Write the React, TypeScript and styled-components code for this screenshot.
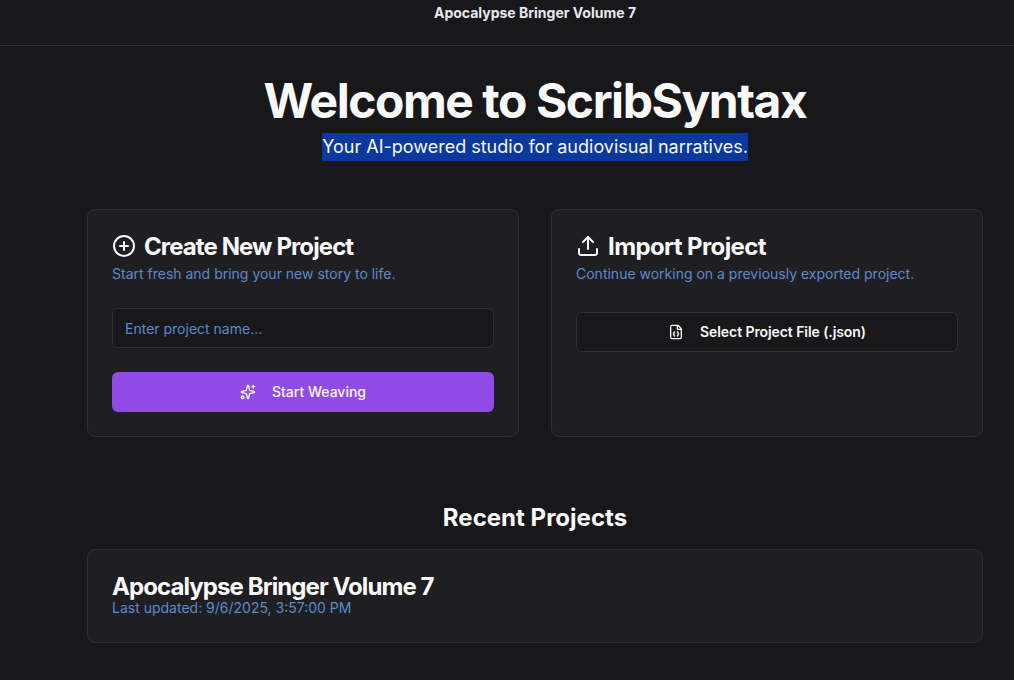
import React from "react";
import { CirclePlus, FileJson, Sparkles, Upload } from "lucide-react";
import styled, { createGlobalStyle } from "styled-components";

const GlobalStyle = createGlobalStyle`
  html, body {
    margin: 0;
    padding: 0;
    background: #18181b;
  }
  * {
    box-sizing: border-box;
  }
`;

const Page = styled.div`
  height: 680px;
  overflow: hidden;
  background: #18181b;
  font-family: Inter, "Liberation Sans", sans-serif;
  color: #fafafa;
`;

const Header = styled.header`
  height: 46px;
  padding: 3px 0 0 56px;
  border-bottom: 1px solid #303034;
  text-align: center;
  font-size: 14px;
  font-weight: 700;
  line-height: 20px;
  color: #e8e8ee;
`;

const Content = styled.div`
  padding-left: 56px;
`;

const Main = styled.main`
  width: 896px;
  margin: 0 auto;
  padding-top: 31px;
`;

const Hero = styled.div`
  text-align: center;
  margin-bottom: 48px;
`;

const Title = styled.h1`
  margin: 0 0 8px;
  font-size: 48px;
  line-height: 48px;
  font-weight: 700;
  letter-spacing: -1.46px;
  color: #fafafa;
`;

const Tagline = styled.p`
  margin: 0;
  font-size: 18px;
  line-height: 28px;
`;

const Selected = styled.span`
  display: inline-block;
  background: #0b389f;
  color: #fafafa;
`;

const CardGrid = styled.div`
  display: grid;
  grid-template-columns: 1fr 1fr;
  gap: 32px;
  margin-bottom: 64px;
`;

const Card = styled.section`
  padding: 24px;
  background: #1f1f23;
  border: 1px solid #303034;
  border-radius: 8px;
`;

const CardTitle = styled.h2`
  display: flex;
  align-items: center;
  gap: 8px;
  margin: 0;
  font-size: 24px;
  font-weight: 700;
  color: #fafafa;
`;

const CardTitleText = styled.span<{ $tracking: number }>`
  padding-top: 2px;
  line-height: 22px;
  letter-spacing: ${props => props.$tracking}px;
`;

const Muted = styled.p`
  margin: 6px 0 0;
  font-size: 14px;
  line-height: 20px;
  color: #5c8acb;
`;

const CardBody = styled.div<{ $offset: number }>`
  display: flex;
  flex-direction: column;
  gap: 24px;
  margin-top: ${props => props.$offset}px;
`;

const NameInput = styled.input`
  height: 40px;
  width: 100%;
  padding: 0 12px;
  background: #18181b;
  border: 1px solid #303034;
  border-radius: 6px;
  font-family: inherit;
  font-size: 14px;
  color: #fafafa;

  &::placeholder {
    color: #5c8acb;
    opacity: 1;
  }
`;

const ActionButton = styled.button<{ $primary?: boolean }>`
  display: flex;
  align-items: center;
  justify-content: center;
  gap: 16px;
  height: 40px;
  width: 100%;
  background: ${props => (props.$primary ? "#914ae6" : "#18181b")};
  border: ${props => (props.$primary ? "none" : "1px solid #303034")};
  border-radius: 6px;
  font-family: inherit;
  font-size: 14px;
  font-weight: ${props => (props.$primary ? 500 : 600)};
  letter-spacing: ${props => (props.$primary ? 0 : -0.08)}px;
  color: #fafafa;
`;

const ButtonLabel = styled.span`
  padding-bottom: 2px;
`;

const SectionTitle = styled.h2`
  margin: 0 0 16px;
  padding-top: 2px;
  text-align: center;
  font-size: 24px;
  line-height: 30px;
  font-weight: 700;
  letter-spacing: 0.02px;
  color: #fafafa;
`;

const ProjectName = styled.h3`
  margin: 0;
  padding-top: 2px;
  font-size: 24px;
  line-height: 22px;
  font-weight: 700;
  letter-spacing: -0.92px;
  color: #fafafa;
`;

const ProjectDate = styled(Muted)`
  margin: 0;
`;

export default function App() {
  return (
    <Page>
      <GlobalStyle />
      <Header>Apocalypse Bringer Volume 7</Header>
      <Content>
        <Main>
          <Hero>
            <Title>Welcome to ScribSyntax</Title>
            <Tagline>
              <Selected>Your AI-powered studio for audiovisual narratives.</Selected>
            </Tagline>
          </Hero>

          <CardGrid>
            <Card>
              <CardTitle>
                <CirclePlus size={24} />
                <CardTitleText $tracking={-0.9}>Create New Project</CardTitleText>
              </CardTitle>
              <Muted>Start fresh and bring your new story to life.</Muted>
              <CardBody $offset={24}>
                <NameInput placeholder="Enter project name..." />
                <ActionButton $primary>
                  <Sparkles size={16} />
                  <ButtonLabel>Start Weaving</ButtonLabel>
                </ActionButton>
              </CardBody>
            </Card>

            <Card>
              <CardTitle>
                <Upload size={24} />
                <CardTitleText $tracking={-0.6}>Import Project</CardTitleText>
              </CardTitle>
              <Muted>Continue working on a previously exported project.</Muted>
              <CardBody $offset={28}>
                <ActionButton>
                  <FileJson size={16} />
                  <ButtonLabel>Select Project File (.json)</ButtonLabel>
                </ActionButton>
              </CardBody>
            </Card>
          </CardGrid>

          <SectionTitle>Recent Projects</SectionTitle>
          <Card>
            <ProjectName>Apocalypse Bringer Volume 7</ProjectName>
            <ProjectDate>Last updated: 9/6/2025, 3:57:00 PM</ProjectDate>
          </Card>
        </Main>
      </Content>
    </Page>
  );
}
